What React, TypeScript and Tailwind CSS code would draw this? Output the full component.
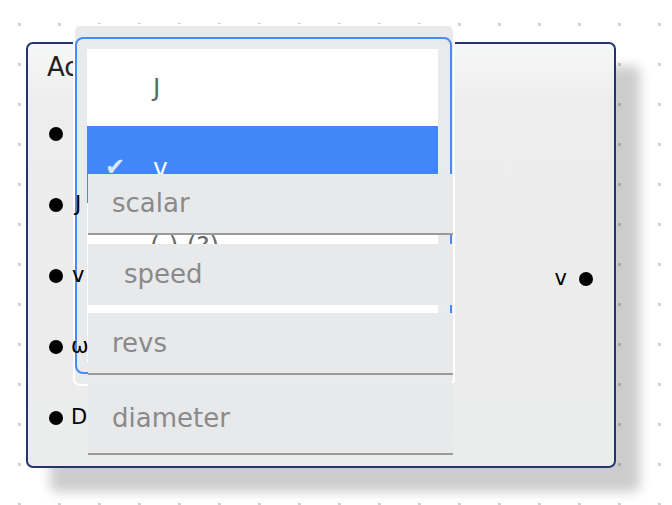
// Node editor canvas with an open select menu over a block
const leftPorts = [
  { label: "", pad: "" },
  { label: "J", pad: "pl-[4px]" },
  { label: "v", pad: "pl-[1px]" },
  { label: "ω", pad: "" },
  { label: "D", pad: "" },
];

const fields = [
  { label: "scalar", pad: "pl-[24px]", h: "h-[61px]", line: true, gap: "mb-[9px]" },
  { label: "speed", pad: "pl-[36px]", h: "h-[61px]", line: false, gap: "mb-[8px]" },
  { label: "revs", pad: "pl-[24px]", h: "h-[62px]", line: true, gap: "mb-[8px]" },
  { label: "diameter", pad: "pl-[24px]", h: "h-[72px]", line: true, gap: "" },
];

function Dot() {
  return <span className="block w-[14px] h-[14px] rounded-full bg-black shrink-0" />;
}

export default function App() {
  return (
    <div
      className="relative w-[672px] h-[505px] overflow-hidden bg-white bg-[linear-gradient(90deg,#fff_37px,transparent_37px),linear-gradient(#fff_37px,#d2d2d2_37px)] bg-[size:40px_40px] bg-[position:21px_26px]"
      style={{ fontFamily: '"DejaVu Sans", "Liberation Sans", sans-serif' }}
    >
      {/* Bloco */}
      <div className="absolute left-[26px] top-[42px] w-[590px] h-[426px] rounded-[7px] border-2 border-[#22356f] bg-[linear-gradient(to_bottom,#f6f7f7,#ededed_14%,#ebecec)] shadow-[24px_24px_12px_rgba(0,0,0,0.2)]">
        <div className="h-[54px] pl-[19px] pt-[6px] text-[26px] text-[#222] leading-[34px]">Ac</div>
        <div className="flex justify-between">
          <div className="flex flex-col">
            {leftPorts.map((p, i) => (
              <div key={i} className="h-[71px] flex items-center gap-[8px] pl-[21px] text-[21px] text-black">
                <Dot />
                <span className={`relative z-20 ${p.pad}`}>{p.label}</span>
              </div>
            ))}
          </div>
          <div className="pt-[168px] pr-[21px]">
            <div className="h-[25px] flex items-center gap-[12px] text-[21px] text-black">
              <span>v</span>
              <Dot />
            </div>
          </div>
        </div>
      </div>

      {/* Menu do select */}
      <div className="absolute z-10 left-[73px] top-[24px] w-[382px] h-[362px] rounded-[7px] border-2 border-white bg-[#e9eaec] pt-[11px] pb-[10px] pr-[1px]">
        <div className="h-full rounded-[8px] border-2 border-[#4a8af5] p-[10px]">
          <div className="h-full bg-white overflow-hidden mr-[2px]">
            <div className="h-[77px] flex items-center pl-[66px] text-[25px] text-[#666]">J</div>
            <div className="h-[77px] flex items-center bg-[#4287f9] text-[25px] text-white">
              <span className="w-[66px] pl-[18px] pt-[4px] text-[24px] text-[#dce6fb]">✔</span>
              <span className="pt-[6px]">v</span>
            </div>
            <div className="h-[77px] flex items-center pl-[63px] pt-[8px] text-[25px] text-[#666]">(-) (?)</div>
            <div className="h-[77px]" />
          </div>
        </div>
      </div>

      {/* Campos sobrepostos */}
      <div className="absolute z-30 left-[88px] top-[174px] w-[365px] flex flex-col">
        {fields.map((f) => (
          <div
            key={f.label}
            className={`${f.h} ${f.gap} ${f.pad} flex items-center bg-[#e8e9eb] text-[26px] text-[#8a8a8a] ${
              f.line ? "border-b-2 border-[#9a9a9a]" : ""
            }`}
          >
            {f.label}
          </div>
        ))}
      </div>
    </div>
  );
}
